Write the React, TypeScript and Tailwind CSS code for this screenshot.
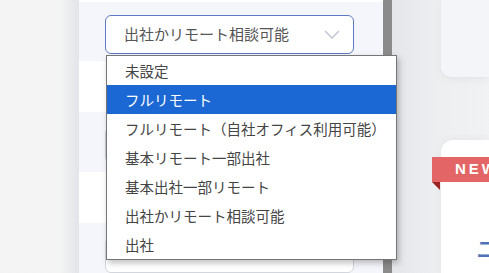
const options = [
  "未設定",
  "フルリモート",
  "フルリモート（自社オフィス利用可能）",
  "基本リモート一部出社",
  "基本出社一部リモート",
  "出社かリモート相談可能",
  "出社",
];

const jp = "font-['Noto_Sans_CJK_JP','Noto_Sans',sans-serif]";

const App = () => {
  return (
    <div className={`relative flex h-[273px] w-[489px] overflow-hidden bg-[#f2f2f3] ${jp}`}>
      {/* left gutter */}
      <div className="h-full w-[79px] shrink-0 bg-linear-to-r from-[#f4f4f4] from-75% to-[#e2e5e9]" />

      {/* form panel */}
      <div className="flex h-full w-[304px] shrink-0 flex-col">
        <div className="h-[2px] bg-white" />
        <div className="h-[65px] bg-[#f4f6fb] pl-[26px] pt-[13px]">
          <div className="flex h-[39px] w-[249px] items-center justify-between rounded-[6px] border border-[#5b7bc4] bg-white pl-[18px] pr-[13px] text-[15px] text-[#555]">
            <span>出社かリモート相談可能</span>
            <svg width="16" height="9" viewBox="0 0 16 9" className="mt-[1px]">
              <polyline points="1,1 8,8 15,1" fill="none" stroke="#c3c8d2" strokeWidth="1.6" />
            </svg>
          </div>
        </div>
        <div className="h-[58px] bg-white" />
        <div className="h-[66px] bg-[#f4f6fb] pl-[26px] pt-[15px]">
          <div className="h-[36px] w-[249px] rounded-[6px] border border-[#c9ccd3] bg-white" />
        </div>
        <div className="h-[57px] bg-white" />
        <div className="flex-1 bg-[#f4f6fb] pl-[26px] pt-[14px]">
          <div className="h-[36px] w-[249px] rounded-[6px] border border-[#d3d6dc] bg-white" />
        </div>
      </div>

      {/* scrollbar */}
      <div className="h-full w-[9px] shrink-0 bg-[#8b8b8b]" />

      {/* right area */}
      <div className="flex h-full flex-1 bg-linear-to-r from-[#e4e6ea] via-[#eeeff1] to-[#f1f2f4]">
        <div className="w-[49px] shrink-0" />
        <div className="flex flex-1 flex-col">
          <div className="h-[77px] rounded-bl-[10px] bg-[#f3f5f9] shadow-[0_2px_8px_rgba(0,0,0,0.06)]" />
          <div className="h-[63px]" />
          <div className="relative flex-1 rounded-tl-[12px] bg-white shadow-[0_0_8px_rgba(0,0,0,0.06)]">
            <div className="absolute left-[-9px] top-[17px] flex h-[25px] w-[60px] items-center overflow-hidden whitespace-nowrap bg-[#e36565] pl-[23px] font-['Liberation_Sans',sans-serif] text-[15px] font-bold tracking-[0.2em] text-white">
              NEW
            </div>
            <svg className="absolute left-[-9px] top-[42px]" width="8" height="8" viewBox="0 0 8 8">
              <polygon points="0,0 8,0 8,8" fill="#9a2424" />
            </svg>
            <div className="absolute left-[35px] top-[90px] whitespace-nowrap text-[24px] font-medium text-[#4f72b8]">
              ニュース
            </div>
          </div>
        </div>
      </div>

      {/* open dropdown list */}
      <ul className="absolute left-[106px] top-[55px] w-[291px] border border-[#767676] bg-white text-[14.5px] text-[#444] shadow-[2px_3px_6px_rgba(0,0,0,0.25)]">
        {options.map((o, i) => (
          <li
            key={o}
            className={`flex h-[29px] items-center whitespace-nowrap pl-[18px] ${
              i === 1 ? "bg-[#1b67d3] text-white" : ""
            }`}
          >
            {o}
          </li>
        ))}
      </ul>
    </div>
  );
};

export default App;
